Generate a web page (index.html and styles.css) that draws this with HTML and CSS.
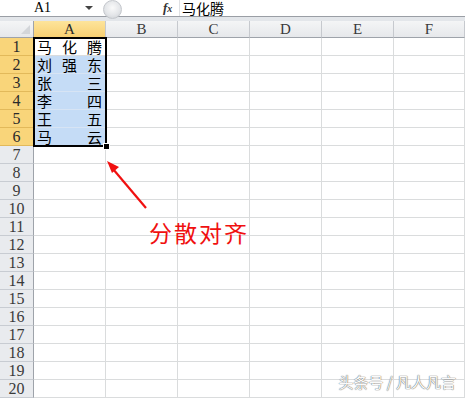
FILE: index.html
```html
<!DOCTYPE html>
<html lang="zh">
<head>
<meta charset="utf-8">
<link rel="stylesheet" href="styles.css">
</head>
<body>
<div class="app">
  <div class="fbar">
    <div class="namebox"><span class="ref">A1</span><span class="dd"></span></div>
    <div class="grip"></div>
    <div class="fx"><i>f</i><span>x</span></div>
    <div class="formula">马化腾</div>
  </div>
  <div class="gap"></div>
  <div class="sheet">
    <div class="grid">
      <div class="hd corner"><span class="tri"></span></div>
      <div class="hd col sel">A</div>
      <div class="hd col">B</div>
      <div class="hd col">C</div>
      <div class="hd col">D</div>
      <div class="hd col">E</div>
      <div class="hd col">F</div>

      <div class="hd row sel">1</div><div class="c dist act"><span>马</span><span>化</span><span>腾</span></div><div class="c"></div><div class="c"></div><div class="c"></div><div class="c"></div><div class="c"></div>
      <div class="hd row sel">2</div><div class="c dist blue"><span>刘</span><span>强</span><span>东</span></div><div class="c"></div><div class="c"></div><div class="c"></div><div class="c"></div><div class="c"></div>
      <div class="hd row sel">3</div><div class="c dist blue"><span>张</span><span>三</span></div><div class="c"></div><div class="c"></div><div class="c"></div><div class="c"></div><div class="c"></div>
      <div class="hd row sel">4</div><div class="c dist blue"><span>李</span><span>四</span></div><div class="c"></div><div class="c"></div><div class="c"></div><div class="c"></div><div class="c"></div>
      <div class="hd row sel">5</div><div class="c dist blue"><span>王</span><span>五</span></div><div class="c"></div><div class="c"></div><div class="c"></div><div class="c"></div><div class="c"></div>
      <div class="hd row sel">6</div><div class="c dist blue"><span>马</span><span>云</span></div><div class="c"></div><div class="c"></div><div class="c"></div><div class="c"></div><div class="c"></div>
      <div class="hd row">7</div><div class="c"></div><div class="c"></div><div class="c"></div><div class="c"></div><div class="c"></div><div class="c"></div>
      <div class="hd row">8</div><div class="c"></div><div class="c"></div><div class="c"></div><div class="c"></div><div class="c"></div><div class="c"></div>
      <div class="hd row">9</div><div class="c"></div><div class="c"></div><div class="c"></div><div class="c"></div><div class="c"></div><div class="c"></div>
      <div class="hd row">10</div><div class="c"></div><div class="c"></div><div class="c"></div><div class="c"></div><div class="c"></div><div class="c"></div>
      <div class="hd row">11</div><div class="c"></div><div class="c"></div><div class="c"></div><div class="c"></div><div class="c"></div><div class="c"></div>
      <div class="hd row">12</div><div class="c"></div><div class="c"></div><div class="c"></div><div class="c"></div><div class="c"></div><div class="c"></div>
      <div class="hd row">13</div><div class="c"></div><div class="c"></div><div class="c"></div><div class="c"></div><div class="c"></div><div class="c"></div>
      <div class="hd row">14</div><div class="c"></div><div class="c"></div><div class="c"></div><div class="c"></div><div class="c"></div><div class="c"></div>
      <div class="hd row">15</div><div class="c"></div><div class="c"></div><div class="c"></div><div class="c"></div><div class="c"></div><div class="c"></div>
      <div class="hd row">16</div><div class="c"></div><div class="c"></div><div class="c"></div><div class="c"></div><div class="c"></div><div class="c"></div>
      <div class="hd row">17</div><div class="c"></div><div class="c"></div><div class="c"></div><div class="c"></div><div class="c"></div><div class="c"></div>
      <div class="hd row">18</div><div class="c"></div><div class="c"></div><div class="c"></div><div class="c"></div><div class="c"></div><div class="c"></div>
      <div class="hd row">19</div><div class="c"></div><div class="c"></div><div class="c"></div><div class="c"></div><div class="c"></div><div class="c"></div>
      <div class="hd row">20</div><div class="c"></div><div class="c"></div><div class="c"></div><div class="c"></div><div class="c"></div><div class="c"></div>
    </div>
    <div class="selbox"><span class="handle"></span></div>
    <svg class="arrow" width="60" height="60" viewBox="0 0 60 60">
      <line x1="47" y1="55" x2="14" y2="16" stroke="#f01010" stroke-width="2.2"/>
      <polygon points="8,8 20,14 13,20" fill="#f01010"/>
    </svg>
    <div class="note">分散对齐</div>
    <div class="mark">头条号 / 凡人凡言</div>
  </div>
</div>
</body>
</html>
```
FILE: styles.css
```css
html, body {
  margin: 0;
  padding: 0;
  background: #fff;
}
.app {
  width: 465px;
  height: 399px;
  overflow: hidden;
  font-family: "Liberation Serif", "DejaVu Serif", serif;
}
.fbar {
  height: 16px;
  display: flex;
  align-items: center;
  background: #fff;
  border-bottom: 1px solid #9a9ea5;
}
.namebox {
  width: 100px;
  display: flex;
  align-items: center;
  justify-content: space-between;
  padding-left: 34px;
  box-sizing: border-box;
  padding-right: 7px;
  font-family: "Liberation Serif", serif;
  font-size: 14px;
  color: #000;
}
.dd {
  width: 0;
  height: 0;
  border-left: 4px solid transparent;
  border-right: 4px solid transparent;
  border-top: 4px solid #444;
}
.grip {
  width: 19px;
  height: 19px;
  margin-top: 2px;
  border-radius: 50%;
  background: radial-gradient(circle at 50% 40%, #fafafa 0, #e4e6e9 55%, #c9ccd1 100%);
  border: 1px solid #c4c7cc;
  box-sizing: border-box;
  margin-left: 3px;
}
.fx {
  margin-left: 41px;
  width: 16px;
  font-family: "Liberation Serif", serif;
  font-weight: bold;
  font-size: 13px;
  color: #333;
  font-style: italic;
}
.fx span { font-size: 10px; }
.formula {
  margin-left: 0;
  padding-left: 2px;
  border-left: 1px solid #dfe1e4;
  height: 16px;
  line-height: 16px;
  font-family: "Noto Sans CJK SC", sans-serif;
  font-size: 14px;
  color: #000;
}
.gap {
  height: 4px;
  background: #e3e6ea;
}
.sheet {
  position: relative;
}
.grid {
  display: grid;
  grid-template-columns: 34px 72px 72px 72px 72px 72px 71px;
  grid-template-rows: 17px repeat(20, 18px);
}
.hd {
  box-sizing: border-box;
  background: linear-gradient(#f4f5f6, #e6e8eb);
  border-right: 1px solid #c6c9ce;
  border-bottom: 1px solid #b8bcc2;
  color: #3a3a3a;
  font-family: "Liberation Serif", "DejaVu Serif", serif;
  font-size: 15px;
  display: flex;
  align-items: center;
  justify-content: center;
}
.hd.col {
  border-bottom: 1px solid #9ea3aa;
  padding-top: 1px;
}
.hd.row {
  background: #e9ebee;
  border-bottom: 1px solid #c8ccd2;
  border-right: 1px solid #9ea3aa;
  justify-content: center;
  font-size: 16px;
}
.hd.sel {
  background: linear-gradient(#fde49b, #f8d072);
  color: #2a2a2a;
}
.hd.row.sel {
  background: #f9d57a;
  border-bottom-color: #e2b95a;
}
.corner {
  position: relative;
  border-bottom: 1px solid #9ea3aa;
  border-right: 1px solid #9ea3aa;
}
.tri {
  position: absolute;
  right: 3px;
  bottom: 3px;
  width: 0;
  height: 0;
  border-left: 9px solid transparent;
  border-bottom: 9px solid #d3d6da;
}
.c {
  box-sizing: border-box;
  border-right: 1px solid #dadcdd;
  border-bottom: 1px solid #dadcdd;
  background: #fff;
}
.c.blue {
  background: #c5dcf6;
  border-bottom-color: #d7e4f4;
}
.dist {
  display: flex;
  justify-content: space-between;
  align-items: center;
  padding: 0 3px 0 3px;
  font-family: "Noto Sans CJK SC", sans-serif;
  font-size: 15px;
  line-height: 17px;
  color: #000;
}
.selbox {
  position: absolute;
  left: 33px;
  top: 16px;
  width: 74px;
  height: 110px;
  border: 2px solid #000;
  box-sizing: border-box;
}
.handle {
  position: absolute;
  right: -5px;
  bottom: -5px;
  width: 5px;
  height: 5px;
  background: #000;
  border: 1px solid #fff;
}
.arrow {
  position: absolute;
  left: 99px;
  top: 132px;
}
.note {
  position: absolute;
  left: 149px;
  top: 194px;
  font-family: "Noto Sans CJK SC", serif;
  font-size: 23px;
  letter-spacing: 2px;
  color: #f01010;
}
.mark {
  position: absolute;
  right: 9px;
  top: 350px;
  font-family: "Noto Sans CJK SC", sans-serif;
  font-size: 15px;
  color: #fafafa;
  text-shadow: 0 0 1px #666, 0 0 1px #666;
}
```
